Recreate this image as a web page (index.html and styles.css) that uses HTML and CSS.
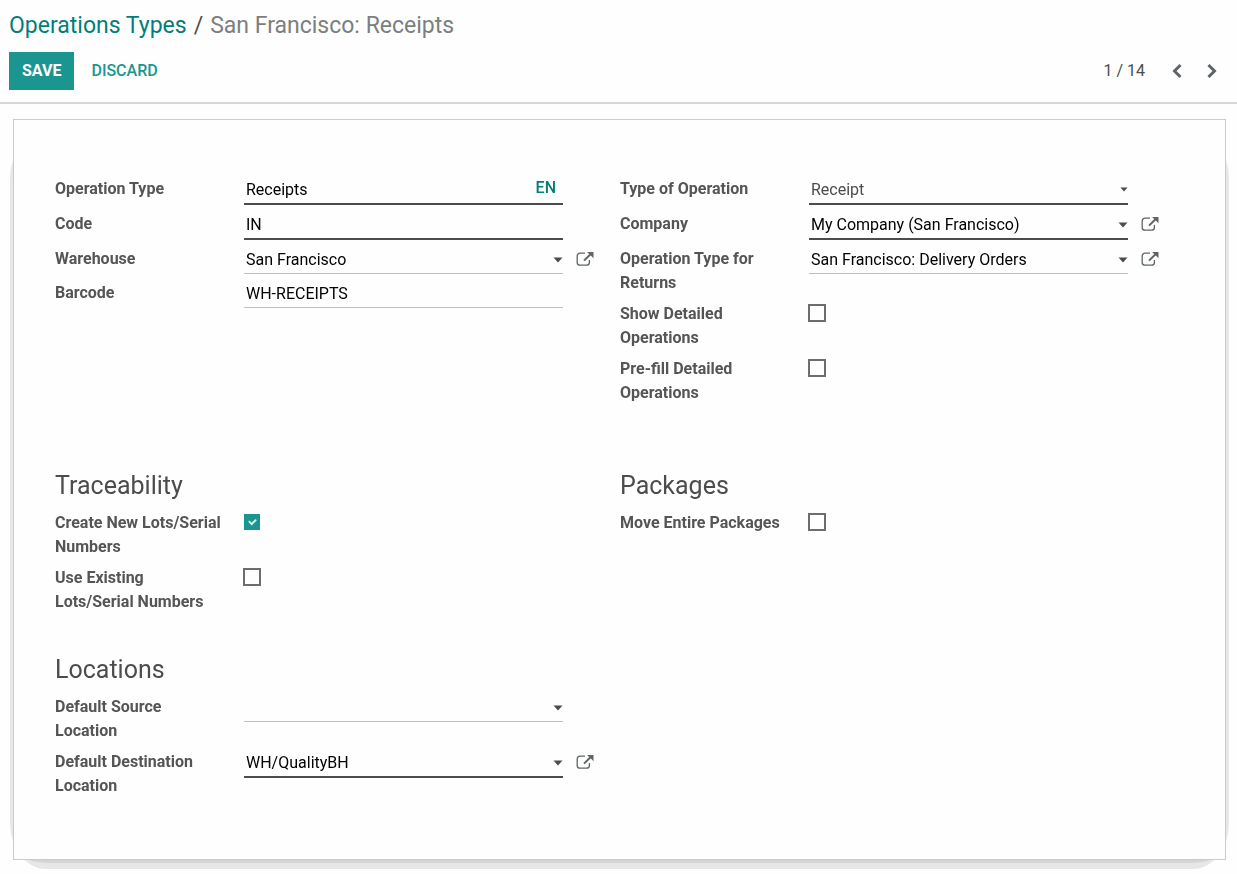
FILE: index.html
```
<!DOCTYPE html>
<html lang="en">
<head>
    <meta charset="utf-8">
    <meta name="viewport" content="width=device-width, initial-scale=1.0"/>
    <title>San Francisco: Receipts</title>
    <link rel="stylesheet" href="styles.css">
</head>
<body>
    <!-- Shared icons -->
    <svg class="icon-defs" aria-hidden="true">
        <symbol id="icon-caret" viewBox="0 0 10 6">
            <path d="M0.5 0.5h9L5 5.5z" fill="currentColor"/>
        </symbol>
        <symbol id="icon-external" viewBox="0 0 18 16">
            <path d="M9 2.2H4a2.8 2.8 0 0 0-2.8 2.8v6.4A2.8 2.8 0 0 0 4 14.2h6.6a2.8 2.8 0 0 0 2.8-2.8V9" fill="none" stroke="currentColor" stroke-width="1.3"/>
            <path d="M8 9.6L14.5 3.2" fill="none" stroke="currentColor" stroke-width="2"/>
            <path d="M11 1h6.5v6.2l-2.2-2.2-2.1-2.1z" fill="currentColor"/>
        </symbol>
    </svg>

    <header class="control-panel">
        <nav class="breadcrumb">
            <a href="#">Operations Types</a>
            <span class="separator">/</span>
            <span class="active">San Francisco: Receipts</span>
        </nav>
        <div class="toolbar">
            <button type="submit" form="operation-type" class="btn btn-primary">SAVE</button>
            <button type="reset" form="operation-type" class="btn btn-link">DISCARD</button>
            <div class="pager">
                <span class="pager-value">1 / 14</span>
                <button type="button" class="pager-button" aria-label="Previous">
                    <svg width="12" height="16" viewBox="0 0 12 16"><path d="M9.5 2L3.5 8l6 6" fill="none" stroke="currentColor" stroke-width="3"/></svg>
                </button>
                <button type="button" class="pager-button" aria-label="Next">
                    <svg width="12" height="16" viewBox="0 0 12 16"><path d="M2.5 2l6 6-6 6" fill="none" stroke="currentColor" stroke-width="3"/></svg>
                </button>
            </div>
        </div><!-- .toolbar -->
    </header>

    <main>
        <form class="sheet" id="operation-type">
            <div class="row row-main">
                <div class="group">
                    <div class="field">
                        <label for="name">Operation Type</label>
                        <div class="control required">
                            <input type="text" id="name" value="Receipts">
                            <button type="button" class="translate">EN</button>
                        </div>
                    </div>
                    <div class="field">
                        <label for="code">Code</label>
                        <div class="control required">
                            <input type="text" id="code" value="IN">
                        </div>
                    </div>
                    <div class="field">
                        <label for="warehouse">Warehouse</label>
                        <div class="control">
                            <select id="warehouse"><option>San Francisco</option></select>
                            <svg class="caret"><use href="#icon-caret"/></svg>
                        </div>
                        <a href="#" class="external" aria-label="Open warehouse"><svg><use href="#icon-external"/></svg></a>
                    </div>
                    <div class="field">
                        <label for="barcode">Barcode</label>
                        <div class="control">
                            <input type="text" id="barcode" value="WH-RECEIPTS">
                        </div>
                    </div>
                </div><!-- .group -->
                <div class="group">
                    <div class="field">
                        <label for="type">Type of Operation</label>
                        <div class="control required selection">
                            <select id="type"><option>Receipt</option></select>
                            <svg class="caret"><use href="#icon-caret"/></svg>
                        </div>
                    </div>
                    <div class="field">
                        <label for="company">Company</label>
                        <div class="control required">
                            <select id="company"><option>My Company (San Francisco)</option></select>
                            <svg class="caret"><use href="#icon-caret"/></svg>
                        </div>
                        <a href="#" class="external" aria-label="Open company"><svg><use href="#icon-external"/></svg></a>
                    </div>
                    <div class="field">
                        <label for="returns">Operation Type for Returns</label>
                        <div class="control">
                            <select id="returns"><option>San Francisco: Delivery Orders</option></select>
                            <svg class="caret"><use href="#icon-caret"/></svg>
                        </div>
                        <a href="#" class="external" aria-label="Open operation type"><svg><use href="#icon-external"/></svg></a>
                    </div>
                    <div class="field">
                        <label for="show-detailed">Show Detailed Operations</label>
                        <input type="checkbox" id="show-detailed">
                    </div>
                    <div class="field">
                        <label for="prefill">Pre-fill Detailed Operations</label>
                        <input type="checkbox" id="prefill">
                    </div>
                </div><!-- .group -->
            </div><!-- .row -->

            <div class="row">
                <div class="group">
                    <h2>Traceability</h2>
                    <div class="field">
                        <label for="new-lots">Create New Lots/Serial Numbers</label>
                        <input type="checkbox" id="new-lots" checked>
                    </div>
                    <div class="field">
                        <label for="existing-lots">Use Existing Lots/Serial Numbers</label>
                        <input type="checkbox" id="existing-lots">
                    </div>
                </div>
                <div class="group">
                    <h2>Packages</h2>
                    <div class="field">
                        <label for="move-packages">Move Entire Packages</label>
                        <input type="checkbox" id="move-packages">
                    </div>
                </div>
            </div><!-- .row -->

            <div class="row">
                <div class="group">
                    <h2>Locations</h2>
                    <div class="field">
                        <label for="source">Default Source Location</label>
                        <div class="control">
                            <select id="source"><option></option></select>
                            <svg class="caret"><use href="#icon-caret"/></svg>
                        </div>
                    </div>
                    <div class="field">
                        <label for="destination">Default Destination Location</label>
                        <div class="control required">
                            <select id="destination"><option>WH/QualityBH</option></select>
                            <svg class="caret"><use href="#icon-caret"/></svg>
                        </div>
                        <a href="#" class="external" aria-label="Open location"><svg><use href="#icon-external"/></svg></a>
                    </div>
                </div>
            </div><!-- .row -->
        </form>
    </main>
</body>
</html>
```
FILE: styles.css
```
* {
    margin: 0;
    padding: 0;
    box-sizing: border-box;
}

body {
    background: #fefefe;
    color: #4c4c4c;
    font-family: Roboto, sans-serif;
    font-size: 16px;
    line-height: 24px;
}

button, input, select {
    font: inherit;
    color: inherit;
    background: none;
    border: 0;
    border-radius: 0;
}

button {
    cursor: pointer;
}

a {
    color: #017e7a;
    text-decoration: none;
}

.icon-defs {
    position: absolute;
    width: 0;
    height: 0;
}

/* Control panel */
.control-panel {
    padding: 10px 9px 12px;
    border-bottom: 2px solid #d6d7d7;
}

.breadcrumb {
    display: flex;
    gap: 7px;
    font-size: 23px;
    line-height: 32px;
}

.breadcrumb .active {
    color: #7c7f80;
}

.toolbar {
    display: flex;
    align-items: center;
    margin-top: 10px;
}

.btn {
    height: 38px;
    padding: 0 13px;
    font-weight: 500;
}

.btn-primary {
    background: #1b9590;
    color: #fff;
    font-weight: 700;
}

.btn-link {
    margin-left: 4px;
    color: #1b9590;
}

.pager {
    display: flex;
    align-items: center;
    margin-left: auto;
    padding-right: 10px;
}

.pager-value {
    margin-right: 26px;
}

.pager-button {
    display: flex;
    color: #5f6567;
}

.pager-button + .pager-button {
    margin-left: 23px;
}

/* Sheet */
main {
    padding: 15px 11px 14px 13px;
}

.sheet {
    position: relative;
    padding: 56px 40px 61px 41px;
    border: 1px solid #c8cccb;
    background: #fefefe;
    transform-style: preserve-3d;
}

/* Stepped shadow under the sheet */
.sheet::before,
.sheet::after {
    content: "";
    position: absolute;
    transform: translateZ(-1px);
}

.sheet::before {
    inset: 12px -4px -10px;
    border-radius: 36px / 46px;
    background: #e6e8e7;
}

.sheet::after {
    inset: 50% 12px -4px;
    border-radius: 24px / 6px;
    background: #d4d6d5;
}

.row {
    display: grid;
    grid-template-columns: 1fr 1fr;
    margin-bottom: 32px;
}

.row-main {
    margin-bottom: 57px;
}

.row:last-child {
    margin-bottom: 0;
}

h2 {
    margin-bottom: 6px;
    font-size: 25px;
    font-weight: 400;
    line-height: 36px;
}

.field {
    display: grid;
    grid-template-columns: 189px 1fr 57px;
    align-items: start;
    margin-bottom: 6px;
}

.row:last-child .field:last-child {
    margin-bottom: 0;
}

label {
    padding: 1px 20px 0 0;
    color: #555;
    font-weight: 700;
}

.control {
    display: grid;
    align-items: center;
    border-bottom: 1px solid #bfc0c0;
    color: #000;
}

.control.required {
    border-bottom: 2px solid #4c4c4c;
}

.control > * {
    grid-area: 1 / 1;
}

.control input,
.control select {
    width: 100%;
    height: 27px;
    padding: 0 2px;
    appearance: none;
    outline: 0;
}

.control.selection {
    color: #4c4c4c;
}

.caret {
    justify-self: end;
    width: 10px;
    height: 6px;
    color: #4c4c4c;
    pointer-events: none;
}

.selection .caret {
    width: 8px;
    height: 5px;
}

.translate {
    align-self: start;
    justify-self: end;
    padding-right: 7px;
    color: #017e7a;
    font-weight: 500;
}

.external {
    display: flex;
    padding: 5px 0 0 13px;
    color: #5f6567;
}

.external svg {
    width: 18px;
    height: 16px;
}

input[type="checkbox"] {
    display: grid;
    place-items: center;
    width: 18px;
    height: 18px;
    margin: 3px 0 0 -1px;
    border: 2px solid #6b6e70;
    appearance: none;
}

input[type="checkbox"]:checked {
    border: 1px solid #fefefe;
    background: #1b9590;
    background-clip: padding-box;
}

input[type="checkbox"]:checked::before {
    content: "";
    width: 7px;
    height: 4px;
    margin-bottom: 2px;
    border: solid #fff;
    border-width: 0 0 2px 2px;
    transform: rotate(-45deg) scale(0.8);
}
```
